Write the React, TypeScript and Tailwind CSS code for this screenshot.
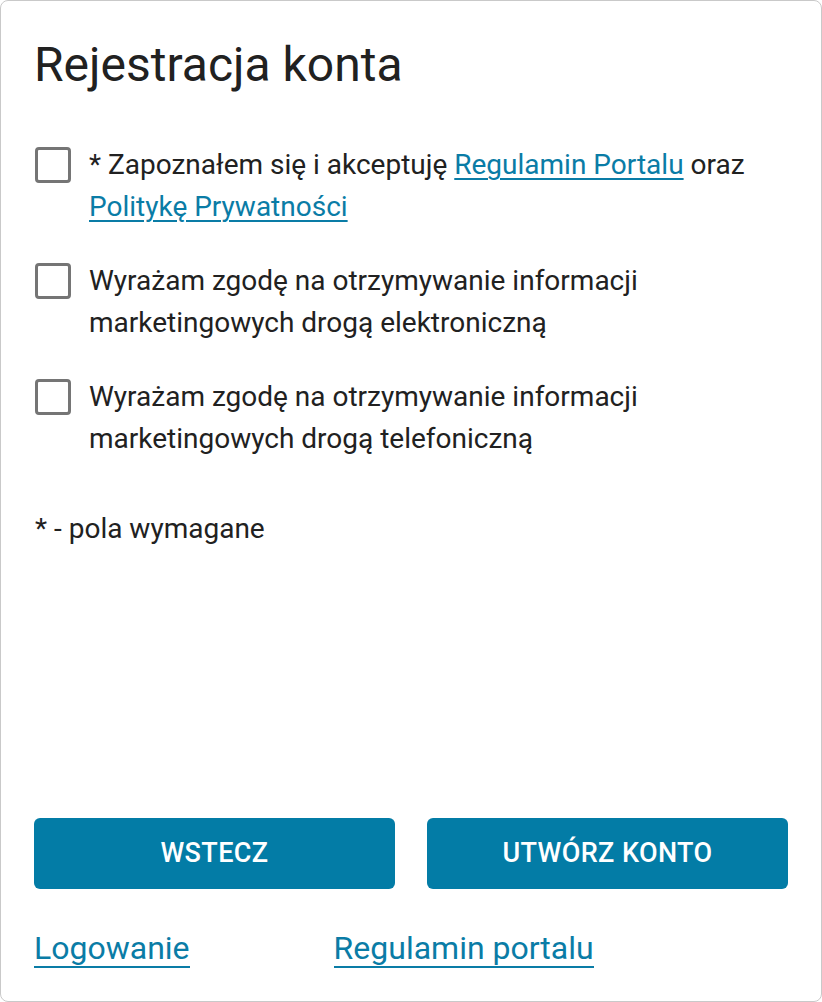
import React from "react"

const rows = [
  {
    id: "terms",
    content: (
      <>
        * Zapoznałem się i akceptuję{" "}
        <a href="#" className="text-[#0a7ca6] underline decoration-2 underline-offset-[4px]">
          Regulamin Portalu
        </a>{" "}
        oraz{" "}
        <a href="#" className="text-[#0a7ca6] underline decoration-2 underline-offset-[4px]">
          Politykę Prywatności
        </a>
      </>
    ),
  },
  {
    id: "email",
    content: "Wyrażam zgodę na otrzymywanie informacji marketingowych drogą elektroniczną",
  },
  {
    id: "phone",
    content: "Wyrażam zgodę na otrzymywanie informacji marketingowych drogą telefoniczną",
  },
]

export default function App() {
  return (
    <div className="h-screen w-full bg-white font-['Roboto',sans-serif] text-[#212121]">
      <div className="flex h-[1002px] w-[822px] flex-col rounded-[8px] border border-[#c9c9c9] px-[33px] pt-[37px] pb-[33px]">
        <h1 className="text-[48px] leading-[54px] font-normal">Rejestracja konta</h1>

        <div className="mt-[52px] flex flex-col gap-[32px]">
          {rows.map((row) => (
            <label key={row.id} className="flex items-start gap-[18px] pl-px">
              <span className="mt-[3px] h-[36px] w-[36px] shrink-0 rounded-[4px] border-[3px] border-[#757575]" />
              <span className="pr-[16px] text-[28px] leading-[42px]">{row.content}</span>
            </label>
          ))}
        </div>

        <p className="mt-[48px] pl-px text-[28px] leading-[42px]">* - pola wymagane</p>

        <div className="mt-auto grid grid-cols-2 gap-[32px]">
          <button className="h-[71px] rounded-[6px] bg-[#037ca6] text-[27px] font-medium tracking-[0.4px] text-white">
            WSTECZ
          </button>
          <button className="h-[71px] rounded-[6px] bg-[#037ca6] text-[27px] font-medium tracking-[0.4px] text-white">
            UTWÓRZ KONTO
          </button>
        </div>

        <div className="mt-[41px] flex gap-[144px]">
          <a href="#" className="border-b-2 border-[#0a7ca6] text-[32px] leading-[36px] text-[#0a7ca6]">
            Logowanie
          </a>
          <a href="#" className="border-b-2 border-[#0a7ca6] text-[32px] leading-[36px] text-[#0a7ca6]">
            Regulamin portalu
          </a>
        </div>
      </div>
    </div>
  )
}
